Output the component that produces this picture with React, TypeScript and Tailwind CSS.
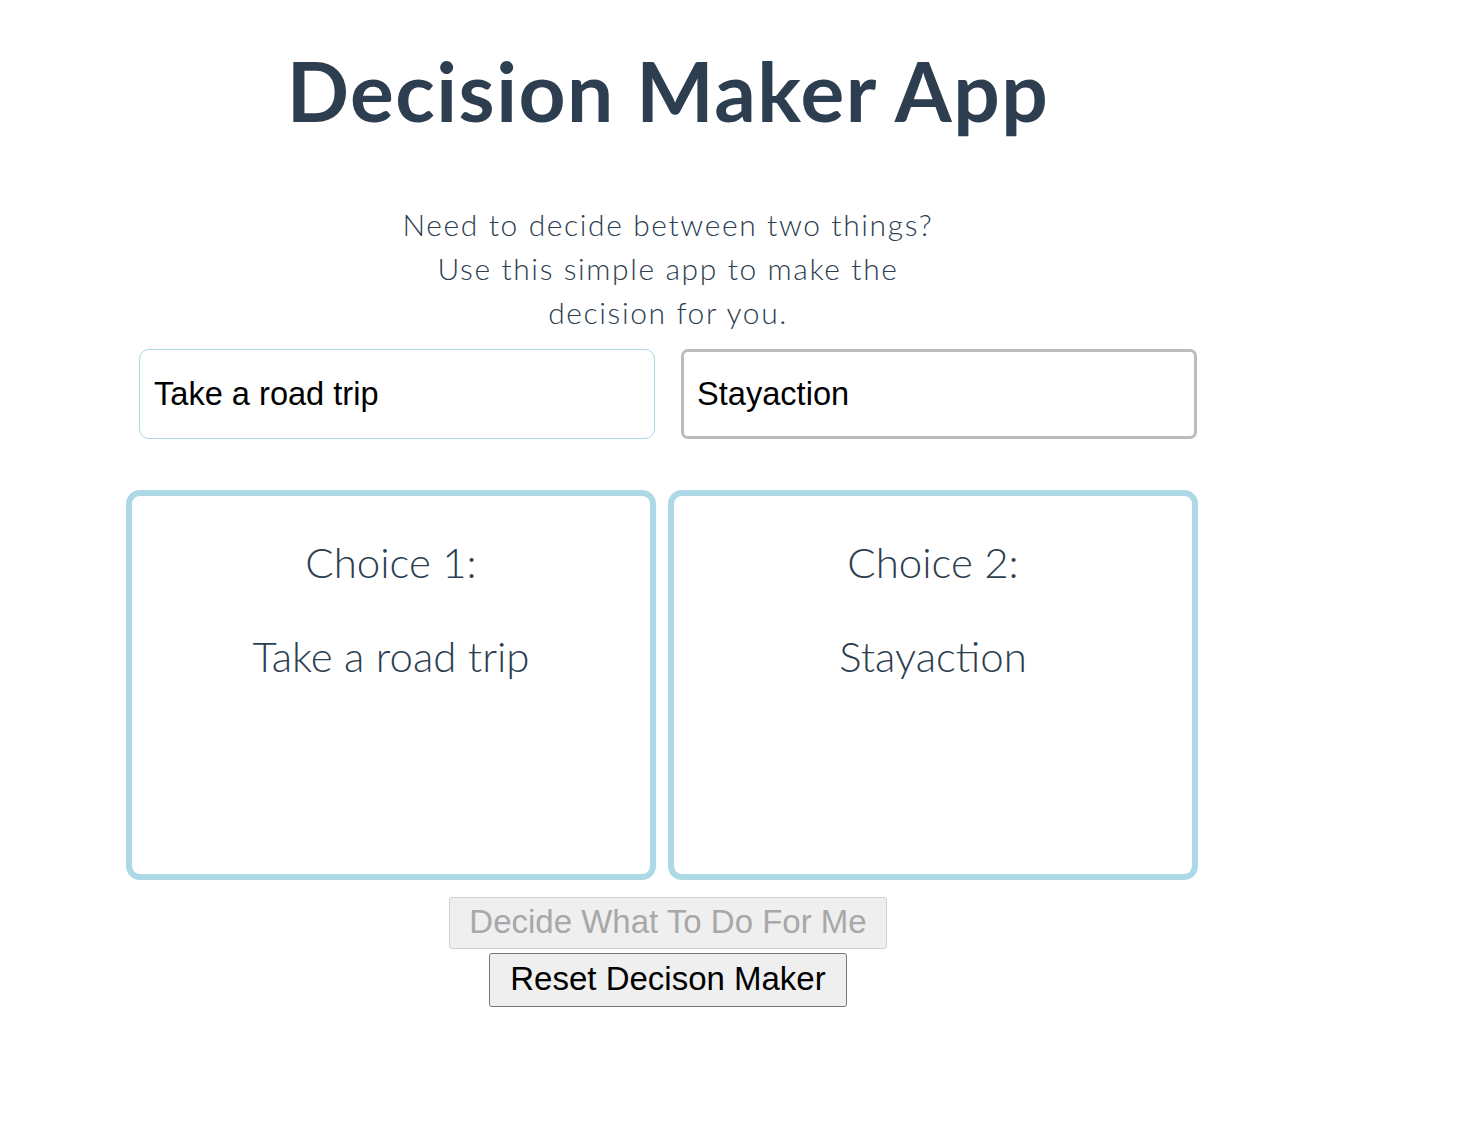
import React from "react";

export default function App() {
  return (
    <div className="w-[1336px] text-center text-[#2c3e50] font-['Lato','Noto_Sans',sans-serif] bg-white min-h-[1148px]">
      <h1 className="mt-[41px] pt-0 text-[82px] leading-[98px] font-bold tracking-[1.5px] m-0">Decision Maker App</h1>
      <p className="mt-[63px] text-[30px] leading-[44px] font-light tracking-[1.6px]">
        Need to decide between two things?
        <br />
        Use this simple app to make the
        <br />
        decision for you.
      </p>
      <div className="mt-[15px] ml-[139px] flex gap-[26px]">
        <input
          defaultValue="Take a road trip"
          className="w-[516px] h-[90px] border-[1.5px] border-[#add8e6] rounded-[10px] pl-[14px] text-[32.6px] text-black font-['Liberation_Sans',Arial,sans-serif] outline-none"
        />
        <input
          defaultValue="Stayaction"
          className="w-[516px] h-[90px] border-[3px] border-[#bcbcbc] rounded-[7px] pl-[13px] text-[32.6px] text-black font-['Liberation_Sans',Arial,sans-serif] outline-none"
        />
      </div>
      <div className="mt-[51px] ml-[126px] flex gap-[12px]">
        {[
          ["Choice 1:", "Take a road trip"],
          ["Choice 2:", "Stayaction"],
        ].map(([a, b]) => (
          <div
            key={a}
            className="w-[530px] h-[390px] border-[6px] border-[#add8e6] rounded-[14px] pt-[40px] text-[42px] leading-[52px] font-light"
          >
            <div>{a}</div>
            <div className="mt-[42px]">{b}</div>
          </div>
        ))}
      </div>
      <div className="mt-[17px] flex flex-col items-center gap-[4px] font-['Liberation_Sans',Arial,sans-serif]">
        <button
          disabled
          className="w-[438px] h-[52px] bg-[#efefef] border border-[#d0d0d0] rounded-[3px] text-[33px] leading-none pb-[4px] text-[#a8a8a8]"
        >
          Decide What To Do For Me
        </button>
        <button className="w-[358px] h-[54px] bg-[#efefef] border border-[#767676] rounded-[3px] text-[33px] leading-none pb-[3px] text-black">
          Reset Decison Maker
        </button>
      </div>
    </div>
  );
}
